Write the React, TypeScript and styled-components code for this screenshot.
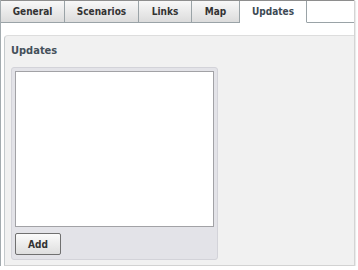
import React from "react"
import styled, { createGlobalStyle } from "styled-components"

const tabs = [
	{ name: "General", width: 64 },
	{ name: "Scenarios", width: 74 },
	{ name: "Links", width: 53 },
	{ name: "Map", width: 48 },
	{ name: "Updates", width: 67 },
]
const activeTab = "Updates"

export default function App() {
	return (
		<>
			<GlobalStyle />
			<Frame>
				<TabBar>
					{tabs.map(tab => (
						<Tab key={tab.name} $width={tab.width} $active={tab.name === activeTab}>
							{tab.name}
						</Tab>
					))}
					<TabFill />
				</TabBar>
				<Body>
					<Panel>
						<Heading>Updates</Heading>
						<Well>
							<ListBox />
							<Button>Add</Button>
						</Well>
					</Panel>
				</Body>
			</Frame>
		</>
	)
}

const GlobalStyle = createGlobalStyle`
	html, body {
		margin: 0;
		background: #ffffff;
	}
	body {
		font-family: "DejaVu Sans Condensed", "DejaVu Sans", Verdana, sans-serif;
		font-stretch: condensed;
	}
`

const Frame = styled.div`
	width: 353px;
	height: 266px;
	display: flex;
	flex-direction: column;
	border-left: 1px solid #a3abaf;
	border-right: 1px solid #d4d4d4;
	box-shadow: 1px 1px 1px rgba(0, 0, 0, 0.08);
`

const TabBar = styled.div`
	display: flex;
	height: 22px;
	border-top: 1px solid #8e8e8e;
`

const Tab = styled.div<{ $active?: boolean; $width: number }>`
	display: flex;
	align-items: center;
	justify-content: center;
	box-sizing: border-box;
	width: ${p => p.$width}px;
	font-size: 10px;
	font-weight: bold;
	color: ${p => (p.$active ? "#3d4a55" : "#333333")};
	background: ${p => (p.$active ? "#ffffff" : "linear-gradient(#f8f8f8, #dcdcdc)")};
	border-right: 1px solid #9aa3a7;
	border-bottom: 1px solid ${p => (p.$active ? "#ffffff" : "#9aa3a7")};
`

const TabFill = styled.div`
	flex: 1;
	border-bottom: 1px solid #9aa3a7;
`

const Body = styled.div`
	flex: 1;
	display: flex;
	flex-direction: column;
	padding-top: 12px;
`

const Panel = styled.div`
	flex: 1;
	display: flex;
	flex-direction: column;
	align-items: flex-start;
	margin-left: 3px;
	padding: 8px 0 5px 6px;
	background: #f1f1f1;
	border-top: 1px solid #dddddd;
	border-left: 1px solid #c4c9cc;
	border-bottom: 1px solid #d2d2d2;
	border-top-left-radius: 4px;
`

const Heading = styled.div`
	font-size: 11px;
	font-weight: bold;
	color: #44505a;
	height: 23px;
`

const Well = styled.div`
	flex: 1;
	width: 199px;
	display: flex;
	flex-direction: column;
	align-items: flex-start;
	gap: 6px;
	padding: 3px;
	background: #e3e3e8;
	border: 1px solid #d3d3d9;
	border-radius: 3px;
`

const ListBox = styled.div`
	width: 197px;
	height: 154px;
	background: #ffffff;
	border: 1px solid #a2a2a6;
`

const Button = styled.button`
	width: 46px;
	height: 22px;
	padding: 0;
	font-family: inherit;
	font-stretch: condensed;
	font-size: 10px;
	font-weight: bold;
	color: #333333;
	background: linear-gradient(#fbfbfb, #dedede);
	border: 1px solid #707070;
	border-radius: 2px;
`
